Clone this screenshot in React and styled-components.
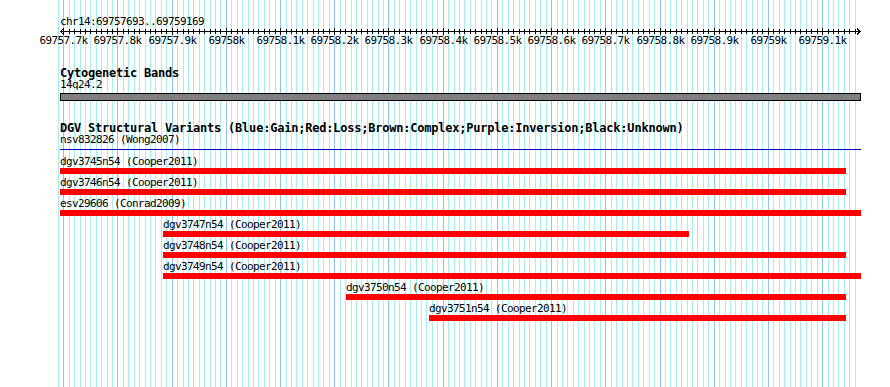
import React from 'react';
import styled, { createGlobalStyle } from 'styled-components';

const START = 69757693;
const END = 69759169;
const WIDTH = 801;
const SCALE = 800 / (END - START);

const toX = (pos) => Math.round((pos - START) * SCALE - 0.5);
const clip = (x) => Math.max(0, Math.min(WIDTH, x));

const features = [
  { name: 'dgv3745n54', study: 'Cooper2011', start: 69757600, end: 69759145 },
  { name: 'dgv3746n54', study: 'Cooper2011', start: 69757600, end: 69759145 },
  { name: 'esv29606', study: 'Conrad2009', start: 69757600, end: 69759300 },
  { name: 'dgv3747n54', study: 'Cooper2011', start: 69757884, end: 69758854 },
  { name: 'dgv3748n54', study: 'Cooper2011', start: 69757884, end: 69759145 },
  { name: 'dgv3749n54', study: 'Cooper2011', start: 69757884, end: 69759300 },
  { name: 'dgv3750n54', study: 'Cooper2011', start: 69758222, end: 69759145 },
  { name: 'dgv3751n54', study: 'Cooper2011', start: 69758375, end: 69759145 },
];

const minorPositions = [];
for (let p = 69757690; p <= 69759160; p += 10) minorPositions.push(p);

const formatLabel = (p) => `${(p / 1000).toString()}k`;

const GlobalStyle = createGlobalStyle`
  html, body {
    margin: 0;
    padding: 0;
    background: #ffffff;
    overflow: hidden;
  }
  body {
    font-family: "DejaVu Sans Mono", "Liberation Mono", monospace;
    color: #000000;
  }
`;

const Panel = styled("div")`
  position: relative;
  margin-left: 60px;
  width: ${WIDTH}px;
  height: 387px;
`;

const GridLayer = styled("svg")`
  position: absolute;
  left: 0;
  top: 0;
  overflow: visible;
  z-index: 0;
`;

const Content = styled("div")`
  position: relative;
  z-index: 1;
  padding-top: 16px;
`;

const SmallText = styled("div")`
  font-family: "DejaVu Sans Mono", "Liberation Mono", monospace;
  font-size: 11px;
  letter-spacing: -0.62px;
  line-height: 11px;
  height: 11px;
  white-space: pre;
`;

const TrackTitle = styled("div")`
  font-family: "DejaVu Sans Mono", "Liberation Mono", monospace;
  font-weight: bold;
  font-size: 12px;
  letter-spacing: -0.22px;
  line-height: 12px;
  height: 12px;
  white-space: pre;
`;

const Section = styled("section")`
  margin-top: ${(p) => p.$gap}px;
`;

const RulerSvg = styled("svg")`
  display: block;
  overflow: visible;
`;

const TickLabels = styled("div")`
  position: relative;
  height: 11px;
`;

const TickLabel = styled("span")`
  position: absolute;
  top: 0;
  transform: translateX(-50%);
  font-size: 11px;
  letter-spacing: -0.62px;
  line-height: 11px;
  white-space: pre;
`;

const BandBar = styled("div")`
  margin-top: 3px;
  height: 6px;
  width: ${WIDTH - 2}px;
  background: #808080;
  border: 1px solid #000000;
`;

const GainLine = styled("div")`
  margin-top: 4px;
  height: 1px;
  width: ${WIDTH}px;
  background: #0000c0;
`;

const FeatureList = styled("div")`
  margin-top: 6px;
`;

const FeatureRow = styled("div")`
  height: 21px;
`;

const FeatureLabel = styled(SmallText)`
  margin-bottom: 1px;
`;

const FeatureBar = styled("div")`
  height: 6px;
  background: ${(p) => p.$color || '#ff0000'};
`;

const Grid = () => (
  <GridLayer width={WIDTH} height={387}>
    {minorPositions.map((p) => {
      const x = toX(p) + 0.5;
      const major = p % 100 === 0;
      return (
        <line
          key={p}
          x1={x}
          x2={x}
          y1={0}
          y2={387}
          stroke={major ? '#8cc4ec' : '#a6eef2'}
          strokeWidth={1}
          shapeRendering="crispEdges"
        />
      );
    })}
  </GridLayer>
);

const Ruler = () => (
  <RulerSvg width={WIDTH} height={8}>
    <line x1={0} x2={WIDTH} y1={4.5} y2={4.5} stroke="#000" shapeRendering="crispEdges" />
    {minorPositions
      .filter((p) => p >= 69757700)
      .map((p) => {
        const x = toX(p) + 0.5;
        const major = p % 100 === 0;
        return (
          <line
            key={p}
            x1={x}
            x2={x}
            y1={major ? 1 : 2}
            y2={major ? 8 : 7}
            stroke="#000"
            shapeRendering="crispEdges"
          />
        );
      })}
    <polyline points="3.5,1.5 0.5,4.5 3.5,7.5" fill="none" stroke="#000" shapeRendering="crispEdges" />
    <polyline
      points={`${WIDTH - 4},1.5 ${WIDTH - 1},4.5 ${WIDTH - 4},7.5`}
      fill="none"
      stroke="#000"
      shapeRendering="crispEdges"
    />
  </RulerSvg>
);

const App = () => {
  const majors = minorPositions.filter((p) => p % 100 === 0 && p >= 69757700);

  return (
    <>
      <GlobalStyle />
      <Panel>
        <Grid />
        <Content>
          <SmallText>chr14:69757693..69759169</SmallText>
          <Ruler />
          <TickLabels>
            {majors.map((p) => (
              <TickLabel key={p} style={{ left: toX(p) + 0.5 }}>
                {formatLabel(p)}
              </TickLabel>
            ))}
          </TickLabels>

          <Section $gap={21}>
            <TrackTitle>Cytogenetic Bands</TrackTitle>
            <SmallText>14q24.2</SmallText>
            <BandBar />
          </Section>

          <Section $gap={21}>
            <TrackTitle>DGV Structural Variants (Blue:Gain;Red:Loss;Brown:Complex;Purple:Inversion;Black:Unknown)</TrackTitle>
            <SmallText>nsv832826 (Wong2007)</SmallText>
            <GainLine />
            <FeatureList>
              {features.map((f) => {
                const left = clip(toX(f.start));
                const right = clip(toX(f.end));
                return (
                  <FeatureRow key={f.name} style={{ paddingLeft: left }}>
                    <FeatureLabel>{`${f.name} (${f.study})`}</FeatureLabel>
                    <FeatureBar style={{ width: right - left }} />
                  </FeatureRow>
                );
              })}
            </FeatureList>
          </Section>
        </Content>
      </Panel>
    </>
  );
};

export default App;
